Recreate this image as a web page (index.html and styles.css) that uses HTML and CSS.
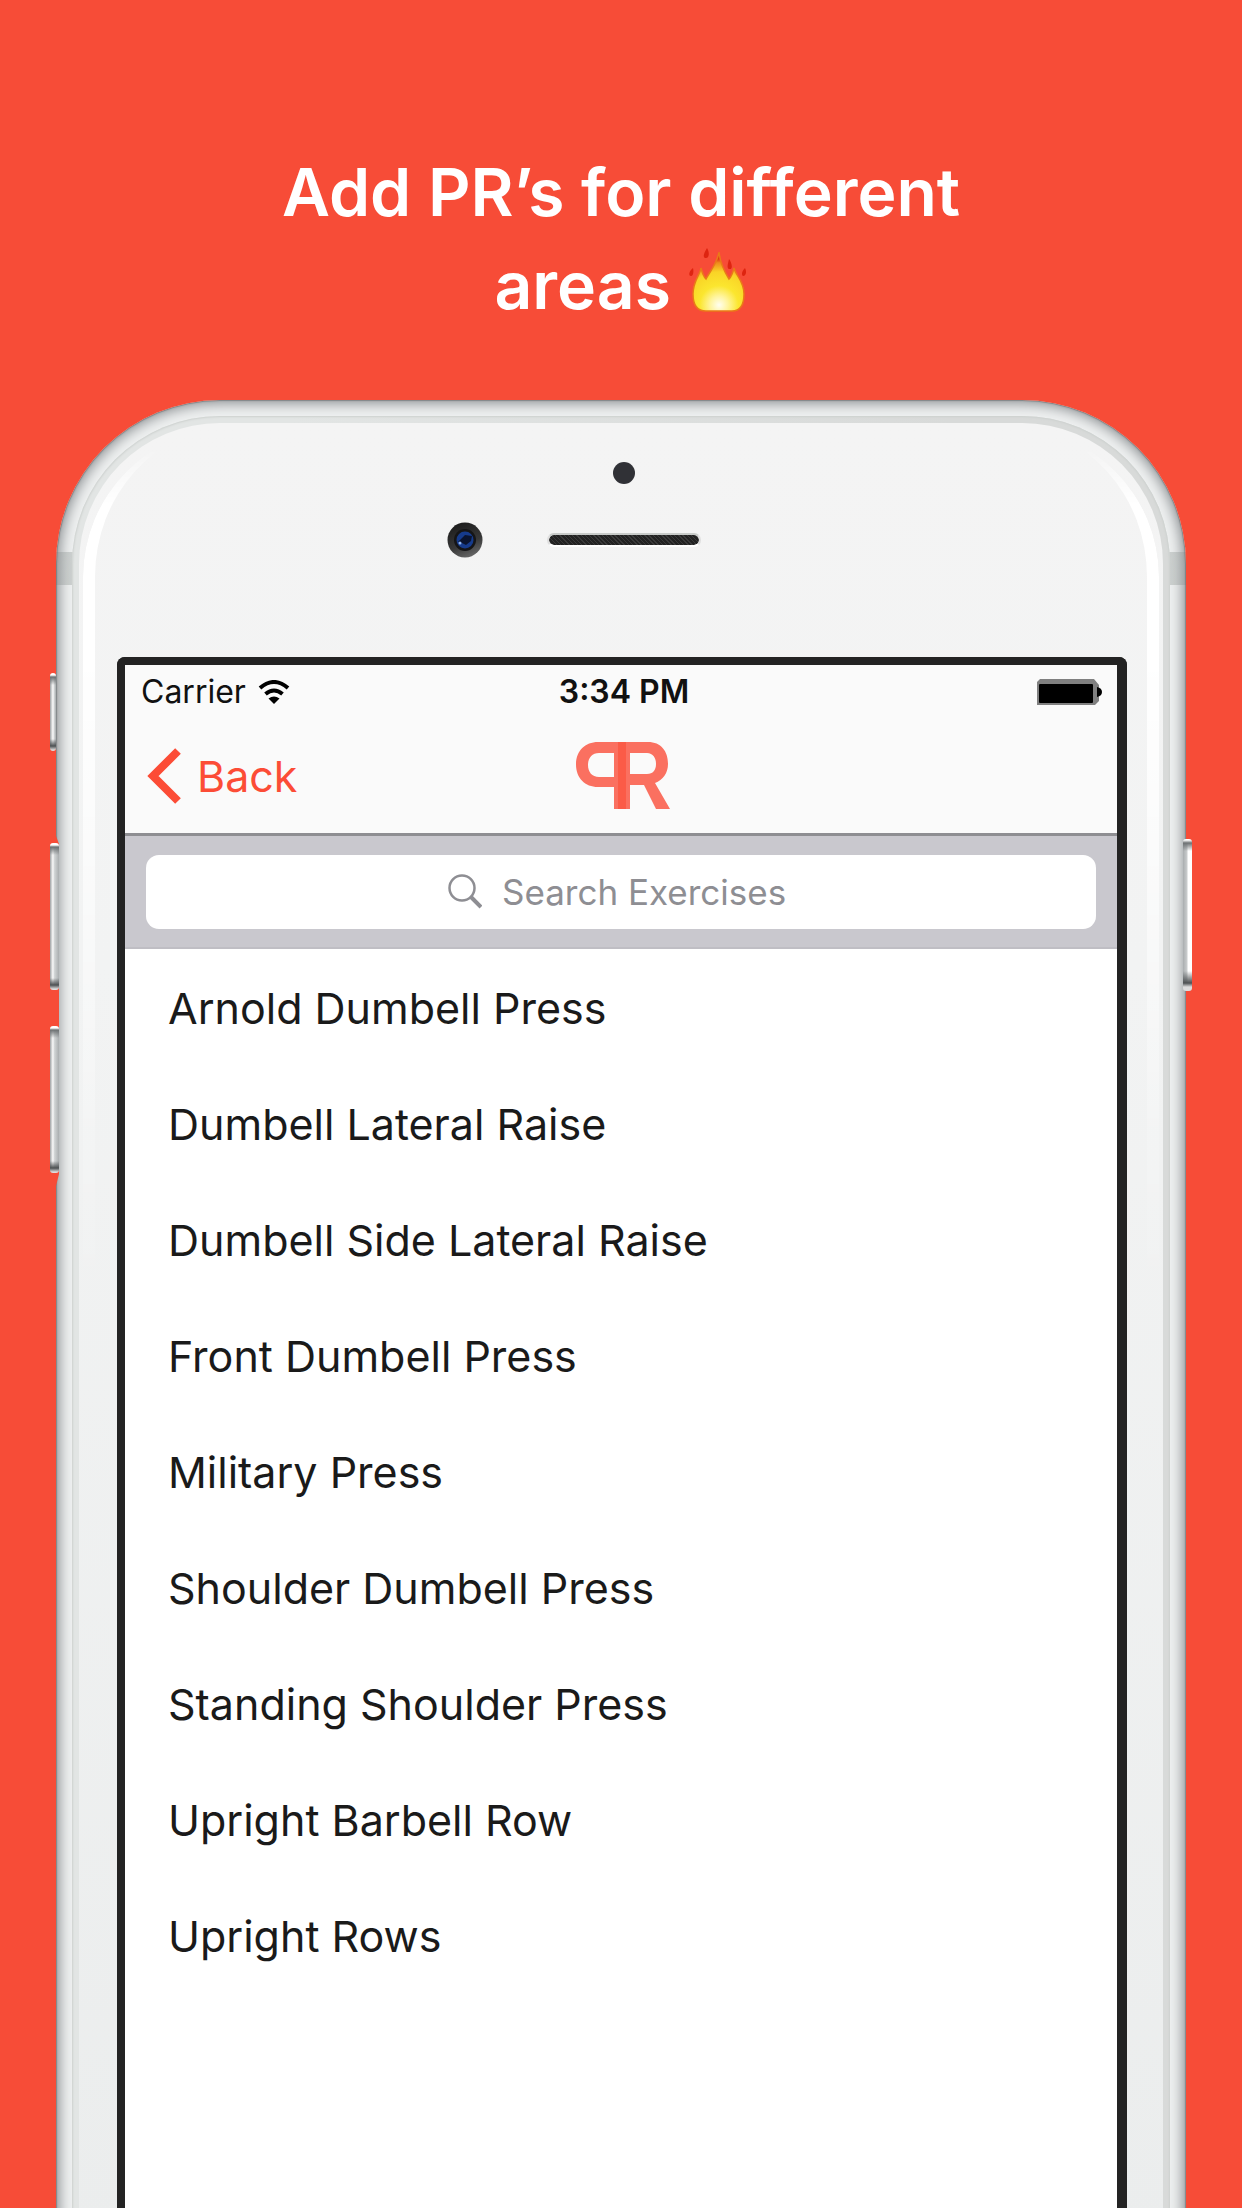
FILE: index.html
```html
<!DOCTYPE html>
<html lang="en">
<head>
<meta charset="utf-8">
<meta name="viewport" content="width=device-width, initial-scale=1">
<title>Add PR’s for different areas</title>
<link rel="stylesheet" href="styles.css">
</head>
<body>
<main class="promo">
  <h1 class="headline">Add PR’s for different<br>areas
    <svg class="flame" viewBox="0 0 60 66" role="img" aria-label="fire">
      <defs>
        <radialGradient id="fire" gradientUnits="userSpaceOnUse" cx="31" cy="58" r="46">
          <stop offset="0" stop-color="#fffef0"/>
          <stop offset=".2" stop-color="#fff49a"/>
          <stop offset=".42" stop-color="#fbe62f"/>
          <stop offset=".72" stop-color="#f9d426"/>
          <stop offset=".92" stop-color="#ee8a1c"/>
          <stop offset="1" stop-color="#e23a14"/>
        </radialGradient>
      </defs>
      <path d="M31 5C29 17 22 24 18 32C15 29 14 25 13 21C12 28 5 34 5 47C5 60 11 64 18 64H44C51 64 56 59 56 47C56 34 48 29 46 21C45 25 44 29 41 32C36 24 32 16 31 5Z" fill="url(#fire)" stroke="#ea7a18" stroke-width="1.5"/>
      <path d="M19 1C22 6 21 11 18 11C14 11 16 6 19 1ZM41 12C44 16 45 22 42 22C38 22 40 17 41 12ZM5 21C6 25 5 29 3 29C0 29 1 24 5 21ZM57 21C59 25 58 29 55 29C53 28 54 24 57 21Z" fill="#de2410"/>
    </svg>
  </h1>

  <div class="phone">
    <span class="key key-mute"></span>
    <span class="key key-up"></span>
    <span class="key key-down"></span>
    <span class="key key-power"></span>
    <div class="rim">
      <div class="face">
        <div class="gloss"></div>
        <div class="sensors">
          <span class="proximity"></span>
          <svg class="camera" viewBox="0 0 36 36" aria-hidden="true">
            <defs>
              <linearGradient id="barrel" x1=".3" y1="0" x2=".7" y2="1"><stop offset="0" stop-color="#1c1c1c"/><stop offset=".6" stop-color="#383838"/><stop offset="1" stop-color="#6a6a6a"/></linearGradient>
            </defs>
            <circle cx="18" cy="18" r="17.500" fill="url(#barrel)"/>
            <circle cx="18" cy="18" r="11" fill="#151517"/>
            <circle cx="18" cy="18" r="8.500" fill="#163b8c"/>
            <path d="M11 20L18 13L25 14L24 19L19 23L15 21Z" fill="#0a1430"/>
            <circle cx="13" cy="21" r="1.500" fill="#8fb4f0"/>
          </svg>
          <span class="speaker"></span>
        </div>

        <div class="screen">
          <div class="statusbar">
            <span class="carrier">Carrier
              <svg class="wifi" viewBox="0 0 32 24" aria-hidden="true">
                <path d="M2 8Q16-4 30 8M7.500 14Q16 7 24.500 14" fill="none" stroke="#000" stroke-width="4"/>
                <path d="M10.500 18.500Q16 14.500 21.500 18.500L16 24Z"/>
              </svg>
            </span>
            <time class="clock">3:34 PM</time>
            <svg class="battery" viewBox="0 0 66 26" role="img" aria-label="Battery full">
              <path d="M3 0H57L62 6V22L58 26H0V3Z" fill="#808080"/>
              <rect x="2" y="5" width="54" height="19" rx="1"/>
              <path d="M60 8Q65 9 65 13Q65 17 60 18Z"/>
            </svg>
          </div>

          <nav class="navbar">
            <button class="back" type="button">
              <svg class="chevron" viewBox="0 0 34 56" aria-hidden="true"><path d="M31 3L6 28L31 53" fill="none" stroke="#fc4c36" stroke-width="8"/></svg>
              Back
            </button>
            <svg class="logo" viewBox="0 0 94 67" role="img" aria-label="PR">
              <g fill="#fa7060" fill-rule="evenodd">
                <path d="M54 0H22C9 0 0 9 0 22.500S9 45 22 45H38V67H54ZM38 11V35H23C16 35 12 30 12 23S16 11 23 11Z"/>
                <path d="M42 0H72C85 0 92 9 92 22C92 31 87 38 79 41L94 67H80L68 43H54V67H42ZM54 11V32H71C77 32 80 28 80 22S77 11 71 11Z"/>
              </g>
              <path d="M42 0H50V67H42Z" fill="#fb5b47"/>
            </svg>
          </nav>

          <form class="search" role="search">
            <label class="field">
              <svg class="lens" viewBox="0 0 34 36" aria-hidden="true"><circle cx="14" cy="14" r="12.500" fill="none" stroke="#8e8e93" stroke-width="2.500"/><path d="M23 23L33 33" stroke="#8e8e93" stroke-width="4"/></svg>
              <input class="query" type="search" placeholder="Search Exercises" aria-label="Search Exercises">
            </label>
          </form>

          <ul class="exercises">
            <li>Arnold Dumbell Press</li>
            <li>Dumbell Lateral Raise</li>
            <li>Dumbell Side Lateral Raise</li>
            <li>Front Dumbell Press</li>
            <li>Military Press</li>
            <li>Shoulder Dumbell Press</li>
            <li>Standing Shoulder Press</li>
            <li>Upright Barbell Row</li>
            <li>Upright Rows</li>
          </ul>
        </div>
      </div>
    </div>
  </div>
</main>
</body>
</html>
```
FILE: styles.css
```css
* {
  box-sizing: border-box;
}

body {
  margin: 0;
  background: #f74c37;
  font-family: Inter, "Liberation Sans", sans-serif;
}

.promo {
  display: flex;
  flex-direction: column;
  min-height: 100vh;
  padding-top: 146px;
  overflow: hidden;
}

.headline {
  height: 254px;
  margin: 0;
  color: #fff;
  font-size: 66px;
  font-weight: 600;
  line-height: 93px;
  text-align: center;
}

.flame {
  width: 60px;
  height: 66px;
  vertical-align: -4px;
}

/* Handset body; its foot runs off the page */
.phone {
  position: relative;
  display: flex;
  flex: 1;
  margin: 0 56px -24px;
  padding: 16px 16px 0;
  border-radius: 164px 164px 0 0;
  background:
    linear-gradient(rgba(190, 195, 193, .7), rgba(190, 195, 193, .7)) 0 152px / 100% 33px no-repeat,
    #eff1f1;
  box-shadow: inset 0 0 1px 1px rgba(90, 95, 98, .5), inset 0 0 14px 3px #85898c;
}

/* The body narrows slightly behind the volume keys */
.phone::before {
  position: absolute;
  top: 436px;
  left: 0;
  width: 3px;
  height: 350px;
  background: #f74c37;
  clip-path: polygon(0 0, 100% 8px, 100% 338px, 0 100%);
  content: "";
}

.rim {
  display: flex;
  flex: 1;
  padding: 7px 7px 0;
  border-radius: 148px 148px 0 0;
  background: linear-gradient(90deg, #e2e5e4 20%, #d8dad9 80%);
  box-shadow: inset 0 0 2px 1px #cdd1cf;
}

.face {
  position: relative;
  display: flex;
  flex: 1;
  flex-direction: column;
  padding: 0 36px 0 38px;
  border-radius: 141px 141px 0 0;
  background: linear-gradient(#f4f4f4, #f2f3f3 30%, #ebeded);
}

.gloss {
  position: absolute;
  inset: 4px 4px 0;
  border: solid #fff;
  border-width: 0 12px;
  border-radius: 150px 150px 0 0;
  -webkit-mask-image: linear-gradient(transparent 20px, #000 80px, #000 200px, rgba(0, 0, 0, .2) 700px, transparent 900px);
  mask-image: linear-gradient(transparent 20px, #000 80px, #000 200px, rgba(0, 0, 0, .2) 700px, transparent 900px);
}

/* Side keys, hanging over the edges of the body */
.key {
  position: absolute;
  left: -6px;
  width: 9px;
  border-radius: 3px;
  background:
    linear-gradient(#fff 2px, #6d7173 4px, transparent 12px, transparent calc(100% - 12px), #4d5153 calc(100% - 5px), #ddd calc(100% - 1px)),
    linear-gradient(90deg, #9da0a2, #fff 3px, #d6d9da 4px, #a9adaf);
}

.key-mute {
  top: 273px;
  width: 6px;
  height: 78px;
}

.key-up {
  top: 443px;
  height: 147px;
}

.key-down {
  top: 626px;
  height: 147px;
}

.key-power {
  top: 439px;
  right: -6px;
  left: auto;
  height: 152px;
  background:
    linear-gradient(#fff 1px, #6d7173 4px, transparent 12px, transparent calc(100% - 20px), #4d5153 calc(100% - 8px), #ddd calc(100% - 4px)),
    linear-gradient(90deg, #a9adaf, #c9cccd 4px, #fff 5px);
}

/* Camera row */
.sensors {
  display: grid;
  grid-template: 22px 36px / 1fr 36px 64px 154px 64px 36px 1fr;
  row-gap: 38px;
  align-items: center;
  align-content: start;
  height: 234px;
  padding: 39px 0 0 4px;
}

.proximity {
  grid-area: 1 / 4;
  justify-self: center;
  width: 22px;
  height: 22px;
  border-radius: 50%;
  background: #303136;
}

.camera {
  grid-area: 2 / 2;
  width: 36px;
  height: 36px;
}

.speaker {
  grid-area: 2 / 4;
  height: 14px;
  border: 2px solid #d2d5d3;
  border-color: #c8cbc9 #dedede #fff;
  border-radius: 7px;
  background: repeating-linear-gradient(45deg, #222 0 2px, #3a3a3a 2px 3px) padding-box;
}

/* App screen */
.screen {
  position: relative;
  display: flex;
  flex: 1;
  flex-direction: column;
  border: solid #232323;
  border-width: 8px 10px 0 8px;
  border-radius: 8px 8px 0 0;
  background: #fff;
}

.statusbar {
  display: grid;
  grid-template-columns: 1fr auto 1fr;
  align-items: center;
  height: 53px;
  padding: 0 14px 0 16px;
  background: #fafafa;
  color: #111;
  font-size: 32px;
  line-height: 53px;
}

.carrier {
  display: flex;
  align-items: center;
  gap: 12px;
}

.wifi {
  width: 32px;
  height: 24px;
}

.clock {
  padding-left: 4px;
  font-weight: 600;
}

.battery {
  justify-self: end;
  width: 66px;
  height: 26px;
}

.navbar {
  display: grid;
  grid-template-columns: 1fr auto 1fr;
  align-items: center;
  height: 118px;
  padding: 0 18px 0 22px;
  border-bottom: 3px solid #8e8e92;
  background: #fafafa;
}

.back {
  display: flex;
  align-items: center;
  gap: 16px;
  justify-self: start;
  padding: 0;
  border: 0;
  background: none;
  color: #fc4c36;
  font: inherit;
  font-size: 43px;
}

.chevron {
  width: 34px;
  height: 56px;
}

.logo {
  width: 94px;
  height: 67px;
}

.search {
  height: 113px;
  padding: 19px 21px;
  border-bottom: 2px solid #bfbec4;
  background: #c9c8ce;
}

.field {
  display: flex;
  align-items: center;
  justify-content: center;
  gap: 20px;
  height: 74px;
  border-radius: 13px;
  background: #fff;
}

.lens {
  width: 34px;
  height: 36px;
}

.query {
  width: 292px;
  padding: 0;
  border: 0;
  outline: 0;
  background: none;
  color: #111;
  font: inherit;
  font-size: 35px;
}

.query::-webkit-search-cancel-button {
  display: none;
}

.query::placeholder {
  color: #8e8e93;
  opacity: 1;
}

.exercises {
  margin: 0;
  padding: 1px 43px;
  color: #1a1a1a;
  font-size: 43px;
  line-height: 116px;
  list-style: none;
}
```
